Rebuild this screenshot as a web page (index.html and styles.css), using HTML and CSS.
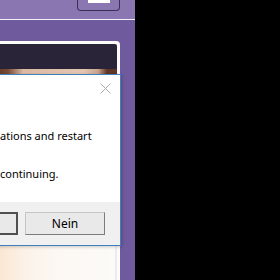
FILE: index.html
```html
<!DOCTYPE html>
<html lang="en">
<head>
    <meta charset="UTF-8">
    <meta name="viewport" content="width=device-width, initial-scale=1.0">
    <title>Restart required</title>
    <link rel="stylesheet" href="styles.css">
</head>
<body>
    <div class="desktop">
        <!-- Window title bar -->
        <div class="titlebar">
            <div class="title-btn"><span class="title-btn-mark"></span></div>
        </div>

        <!-- Page shown inside the window -->
        <div class="panel">
            <div class="panel-head"></div>
            <div class="panel-strip"></div>
            <div class="panel-body"></div>
        </div>

        <!-- Message box over the window -->
        <div class="dialog">
            <div class="dialog-main">
                <div class="dialog-top">
                    <svg class="close" width="11" height="11" viewBox="0 0 11 11">
                        <path d="M0.5 0.5 L10.5 10.5 M10.5 0.5 L0.5 10.5" stroke="#a9a9a9" stroke-width="1" fill="none"/>
                    </svg>
                </div>
                <div class="message">
                    <div class="line"><span class="lead">Setup has to close all running applic</span>ations and restart</div>
                    <div class="line line-gap"><span class="lead">Please save your open files before </span>continuing.</div>
                </div>
            </div>
            <div class="dialog-footer">
                <button class="btn btn-default">Ja</button>
                <button class="btn">Nein</button>
            </div>
        </div>
    </div>
</body>
</html>
```

FILE: styles.css
```css
html, body {
    margin: 0;
    height: 100%;
}

body {
    background-color: #000000;
    font-family: "Noto Sans", "Open Sans", sans-serif;
    font-size: 11px;
    overflow: hidden;
}

.desktop {
    position: relative;
    width: 135px;
    height: 280px;
    background-color: #6e5a9c;
    display: flex;
    flex-direction: column;
}

.titlebar {
    height: 19px;
    background-color: #8a77b1;
    border-bottom: 1px solid #f3f1f7;
    flex-shrink: 0;
}

.title-btn {
    box-sizing: border-box;
    margin-left: 77px;
    width: 43px;
    height: 11px;
    padding-left: 10px;
    border: 1px solid #3b2f5a;
    border-top: none;
    border-radius: 0 0 4px 4px;
}

    .title-btn-mark {
        display: block;
        width: 22px;
        height: 3px;
        background-color: #ffffff;
    }

.panel {
    flex: 1;
    display: flex;
    flex-direction: column;
    margin: 21px 15px 0 -10px;
    border: 3px solid #fbfbfb;
    border-bottom: none;
    border-radius: 0 4px 0 0;
    background-color: #fbfbfb;
}

.panel-head {
    height: 25px;
    background-color: #2a2439;
    border-radius: 0 2px 0 0;
}

.panel-strip {
    height: 5px;
    background: linear-gradient(90deg, #5c3022 0, #7a4a35 15px, #d9b9a3 30px, #e2c6b2 90px, #c9a58d 105px, #5e3526 114px);
}

.panel-body {
    flex: 1;
    background:
        linear-gradient(180deg, rgba(252, 250, 247, 0) 0, rgba(252, 250, 247, 0.7) 34px),
        linear-gradient(90deg, #f3a864 0, #f7c999 16px, #fbe6d2 40px, #fcf5ee 75px, #fbfbfb 100%);
    box-shadow: inset -2px 0 0 #ececec;
}

/* Message box */
.dialog {
    position: absolute;
    top: 74px;
    left: -200px;
    box-sizing: border-box;
    width: 321px;
    height: 172px;
    display: flex;
    flex-direction: column;
    border: 1px solid #3f7fbd;
    background-color: #ffffff;
    box-shadow: 1px 1px 3px rgba(0, 0, 0, 0.2);
}

.dialog-main {
    flex: 1;
    padding-left: 199px;
}

.dialog-top {
    display: flex;
    justify-content: flex-end;
    padding: 8px 9px 0 0;
}

.close {
    display: block;
}

.message {
    margin-top: 32px;
    color: #000000;
    line-height: 19px;
}

    .line {
        display: flex;
        white-space: nowrap;
    }

    .line-gap {
        margin-top: 19px;
    }

    .lead {
        width: 0;
        min-width: 0;
        display: flex;
        justify-content: flex-end;
    }

.dialog-footer {
    height: 43px;
    box-sizing: border-box;
    padding: 10px 15px 0 0;
    display: flex;
    justify-content: flex-end;
    align-items: flex-start;
    gap: 7px;
    background-color: #f0f0f0;
}

.btn {
    box-sizing: border-box;
    width: 80px;
    height: 23px;
    padding: 0;
    font-family: inherit;
    font-size: 12px;
    color: #000000;
    background-color: #e9e9e9;
    border: 1px solid;
    border-color: #c4c4c4 #7c7c7c #7c7c7c #c4c4c4;
}

.btn-default {
    border: 2px solid #505050;
}
```
